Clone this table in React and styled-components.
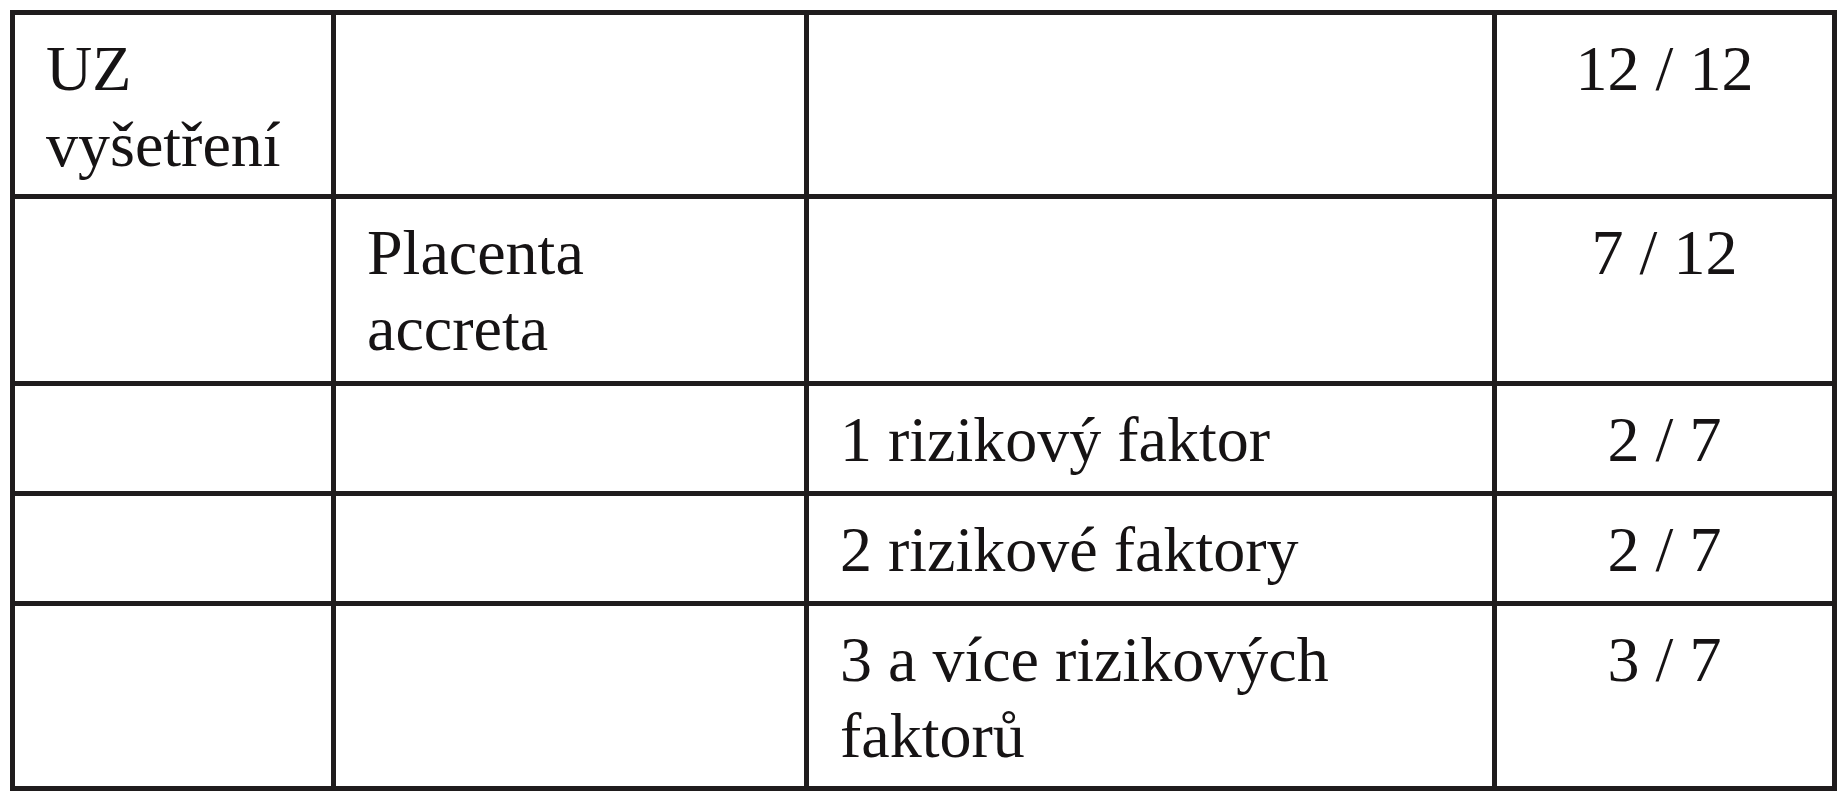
import React from "react";
import styled, { createGlobalStyle } from "styled-components";

const rows = [
  { cells: [["UZ", "vyšetření"], null, null], result: "12 / 12" },
  { cells: [null, ["Placenta", "accreta"], null], result: "7 / 12" },
  { cells: [null, null, ["1 rizikový faktor"]], result: "2 / 7" },
  { cells: [null, null, ["2 rizikové faktory"]], result: "2 / 7" },
  { cells: [null, null, ["3 a více rizikových", "faktorů"]], result: "3 / 7" },
];

const App = () => {
  return (
    <Page>
      <GlobalStyle />
      <Grid>
        {rows.map((row, i) => (
          <React.Fragment key={i}>
            {row.cells.map((lines, j) => (
              <Cell key={j}>
                {lines &&
                  lines.map((line, k) => (
                    <React.Fragment key={k}>
                      {k > 0 && <br />}
                      {line}
                    </React.Fragment>
                  ))}
              </Cell>
            ))}
            <Cell $center>{row.result}</Cell>
          </React.Fragment>
        ))}
      </Grid>
    </Page>
  );
};

const GlobalStyle = createGlobalStyle`
  body {
    margin: 0;
    background: #ffffff;
  }
`;

const Page = styled.div`
  padding: 10px;
  background: #ffffff;
`;

const Grid = styled.div`
  display: grid;
  grid-template-columns: 316px 468px 683px 335px;
  grid-template-rows: 179px 182px 105px 105px 180px;
  gap: 5px;
  padding: 5px;
  width: 1827px;
  box-sizing: border-box;
  background-color: #1f1c1d;
`;

const Cell = styled.div`
  background: #ffffff;
  padding: ${(p) => (p.$center ? "16px 0 0 0" : "16px 20px 0 31px")};
  font-family: "Liberation Serif", "Times New Roman", serif;
  font-size: 64px;
  line-height: 76px;
  color: #161314;
  text-align: ${(p) => (p.$center ? "center" : "left")};
  white-space: nowrap;
`;

export default App;
